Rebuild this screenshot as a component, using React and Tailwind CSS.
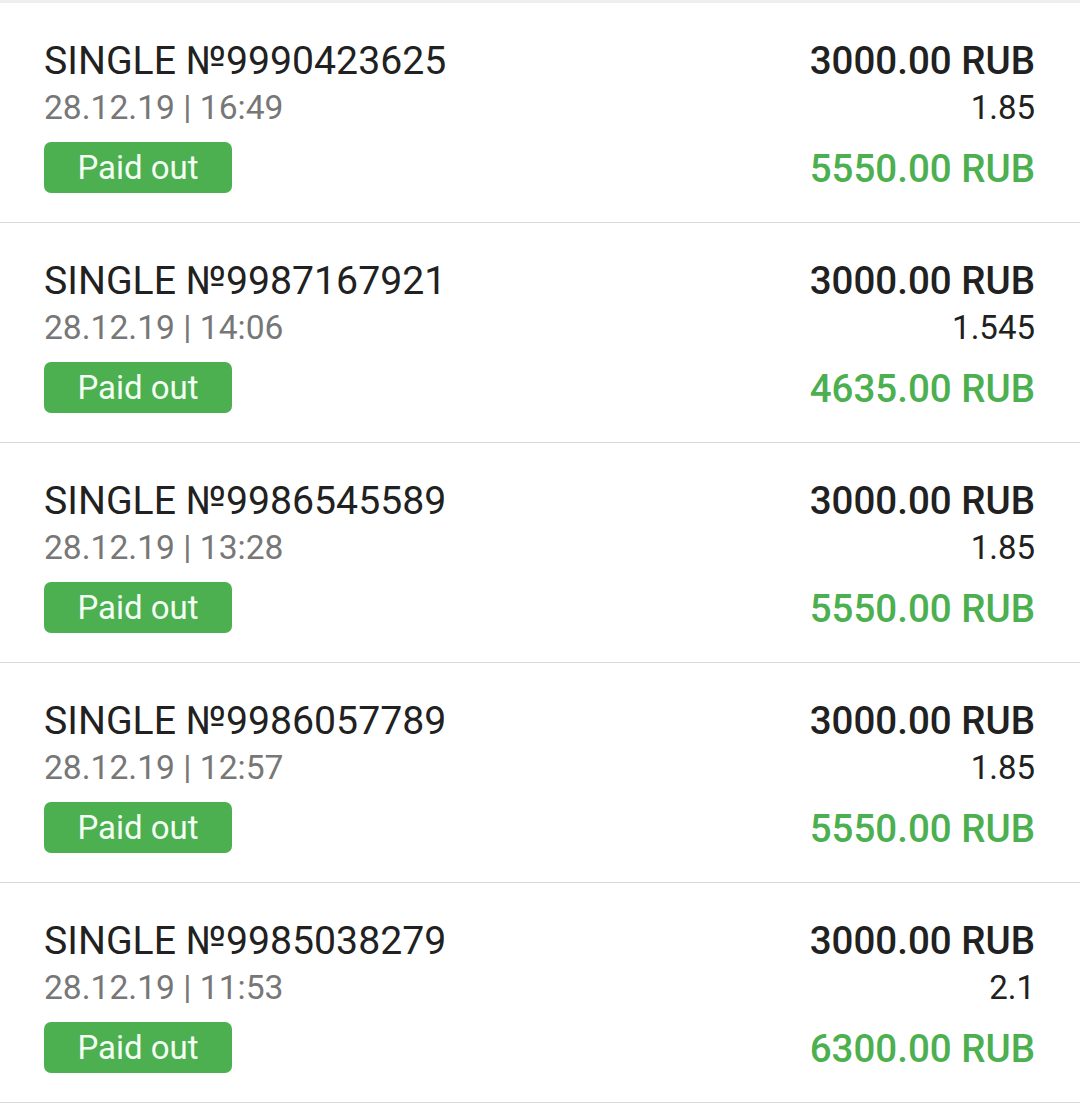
const bets = [
  { id: "9990423625", date: "28.12.19 | 16:49", stake: "3000.00 RUB", odds: "1.85", win: "5550.00 RUB" },
  { id: "9987167921", date: "28.12.19 | 14:06", stake: "3000.00 RUB", odds: "1.545", win: "4635.00 RUB" },
  { id: "9986545589", date: "28.12.19 | 13:28", stake: "3000.00 RUB", odds: "1.85", win: "5550.00 RUB" },
  { id: "9986057789", date: "28.12.19 | 12:57", stake: "3000.00 RUB", odds: "1.85", win: "5550.00 RUB" },
  { id: "9985038279", date: "28.12.19 | 11:53", stake: "3000.00 RUB", odds: "2.1", win: "6300.00 RUB" },
];

function BetRow({ bet }) {
  return (
    <div className="h-[220px] border-b border-[#d9d9d9] flex justify-between pl-[44px] pr-[45px] pt-[35px]">
      {/* Left side */}
      <div className="flex flex-col items-start">
        <div className="text-[39.2px] leading-[46px] text-[#212121]">SINGLE №{bet.id}</div>
        <div className="text-[33.6px] leading-[40px] text-[#777777] mt-[4px]">{bet.date}</div>
        <div className="mt-[14px] w-[188px] h-[51px] rounded-[7px] bg-[#4caf50] flex items-center justify-center text-[33px] leading-none text-[#f3fff3]">
          Paid out
        </div>
      </div>

      {/* Right side */}
      <div className="flex flex-col items-end">
        <div className="text-[38.5px] leading-[46px] font-medium text-[#212121]">{bet.stake}</div>
        <div className="text-[33px] leading-[40px] text-[#212121] mt-[4px]">{bet.odds}</div>
        <div className="text-[38.5px] leading-[46px] font-medium text-[#4caf50] mt-[18px]">{bet.win}</div>
      </div>
    </div>
  );
}

export default function App() {
  return (
    <div className="w-[1080px] min-h-[1117px] bg-white border-t-[3px] border-[#eeeeee] font-['Roboto','Liberation_Sans',sans-serif]">
      {bets.map((bet) => (
        <BetRow key={bet.id} bet={bet} />
      ))}
    </div>
  );
}
